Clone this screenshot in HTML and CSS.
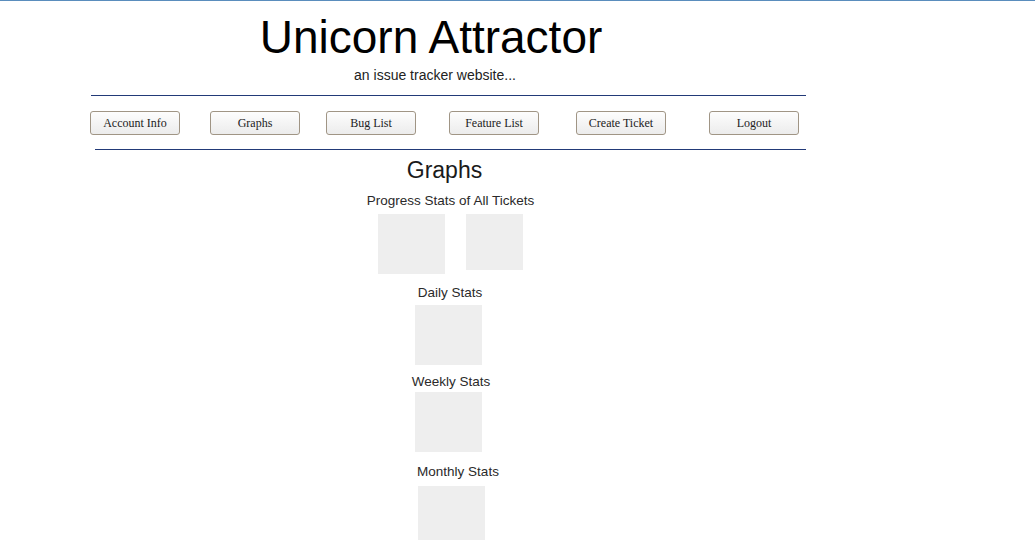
FILE: index.html
```html
<!DOCTYPE html>
<html>
<head>
<meta charset="utf-8">
<title>Unicorn Attractor</title>
<link rel="stylesheet" href="styles.css">
</head>
<body>
<div class="page">
  <header class="header">
    <h1 class="title">Unicorn Attractor</h1>
    <p class="subtitle">an issue tracker website...</p>
    <hr class="rule rule-top">
    <nav class="nav">
      <div class="nav-cell w1"><button class="btn">Account Info</button></div>
      <div class="nav-cell w2"><button class="btn">Graphs</button></div>
      <div class="nav-cell w3"><button class="btn">Bug List</button></div>
      <div class="nav-cell w4"><button class="btn">Feature List</button></div>
      <div class="nav-cell w5"><button class="btn">Create Ticket</button></div>
      <div class="nav-cell w6"><button class="btn">Logout</button></div>
    </nav>
    <hr class="rule rule-bottom">
  </header>
  <main class="graphs">
    <h2 class="graphs-title">Graphs</h2>
    <div class="label label-progress">Progress Stats of All Tickets</div>
    <div class="box-row">
      <div class="box box-a"></div>
      <div class="box box-b"></div>
    </div>
    <div class="label label-daily">Daily Stats</div>
    <div class="box-wrap"><div class="box box-a"></div></div>
    <div class="label label-weekly">Weekly Stats</div>
    <div class="box-wrap"><div class="box box-a"></div></div>
    <div class="label label-monthly">Monthly Stats</div>
    <div class="box-wrap box-wrap-monthly"><div class="box box-a"></div></div>
  </main>
</div>
</body>
</html>
```

FILE: styles.css
```css
html, body {
  margin: 0;
  padding: 0;
  background: #ffffff;
}
body {
  border-top: 1px solid #5a8dbd;
  font-family: "Liberation Sans", Arial, sans-serif;
  color: #222222;
}
.page {
  width: 715px;
  margin-left: 91px;
}
.header {
  text-align: center;
}
.title {
  margin: 10px 0 0 0;
  padding-right: 35px;
  font-size: 46px;
  line-height: 52px;
  font-weight: normal;
  color: #000000;
}
.subtitle {
  margin: 4px 0 0 0;
  padding-right: 27px;
  font-size: 14px;
  line-height: 16px;
  color: #222222;
}
.rule {
  border: 0;
  height: 1px;
  background: #223a78;
  margin: 0;
}
.rule-top {
  margin-top: 12px;
}
.rule-bottom {
  margin-top: 14px;
  margin-left: 4px;
}
.nav {
  display: flex;
  margin-top: 15px;
  margin-left: -1px;
}
.nav-cell {
  flex: none;
  text-align: left;
}
.w1 { width: 120px; }
.w2 { width: 116px; }
.w3 { width: 123px; }
.w4 { width: 127px; }
.w5 { width: 133px; }
.w6 { width: 90px; }
.btn {
  display: block;
  width: 90px;
  height: 24px;
  margin: 0;
  padding: 0;
  border: 1px solid #a09585;
  border-radius: 3px;
  background: linear-gradient(#fdfdfd, #ececec);
  font-family: "Liberation Serif", "Times New Roman", serif;
  font-size: 12px;
  color: #222222;
  cursor: pointer;
}
.graphs {
  display: flex;
  flex-direction: column;
  align-items: center;
}
.graphs-title {
  margin: 7px 0 0 0;
  padding-right: 8px;
  font-size: 23px;
  line-height: 26px;
  font-weight: normal;
  color: #1a1a1a;
}
.label {
  font-size: 13.5px;
  line-height: 16px;
  color: #2a2a2a;
}
.label-progress {
  margin-top: 10px;
  padding-left: 4px;
}
.box-row {
  display: flex;
  align-items: flex-start;
  gap: 21px;
  margin-top: 5px;
  padding-left: 4px;
}
.box {
  background: #eeeeee;
}
.box-a {
  width: 67px;
  height: 60px;
}
.box-b {
  width: 57px;
  height: 56px;
}
.label-daily {
  margin-top: 11px;
  padding-left: 3px;
}
.box-wrap {
  margin-top: 4px;
}
.label-weekly {
  margin-top: 9px;
  padding-left: 5px;
}
.label-weekly + .box-wrap {
  margin-top: 2px;
}
.label-monthly {
  margin-top: 12px;
  padding-left: 19px;
}
.box-wrap-monthly {
  margin-top: 6px;
  padding-left: 6px;
}
```
